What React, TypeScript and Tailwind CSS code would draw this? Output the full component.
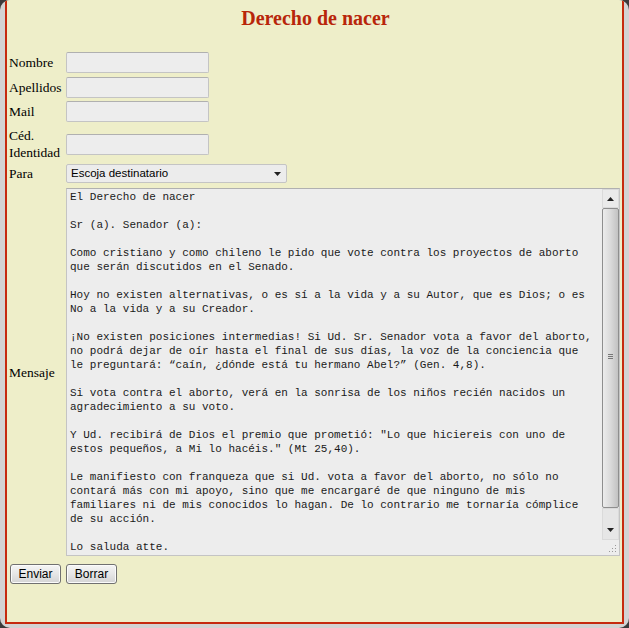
const MESSAGE = [
  "El Derecho de nacer",
  "",
  "Sr (a). Senador (a):",
  "",
  "Como cristiano y como chileno le pido que vote contra los proyectos de aborto",
  "que serán discutidos en el Senado.",
  "",
  "Hoy no existen alternativas, o es sí a la vida y a su Autor, que es Dios; o es",
  "No a la vida y a su Creador.",
  "",
  "¡No existen posiciones intermedias! Si Ud. Sr. Senador vota a favor del aborto,",
  "no podrá dejar de oír hasta el final de sus días, la voz de la conciencia que",
  "le preguntará: “caín, ¿dónde está tu hermano Abel?” (Gen. 4,8).",
  "",
  "Si vota contra el aborto, verá en la sonrisa de los niños recién nacidos un",
  "agradecimiento a su voto.",
  "",
  "Y Ud. recibirá de Dios el premio que prometió: \"Lo que hiciereis con uno de",
  "estos pequeños, a Mi lo hacéis.\" (Mt 25,40).",
  "",
  "Le manifiesto con franqueza que si Ud. vota a favor del aborto, no sólo no",
  "contará más con mi apoyo, sino que me encargaré de que ninguno de mis",
  "familiares ni de mis conocidos lo hagan. De lo contrario me tornaría cómplice",
  "de su acción.",
  "",
  "Lo saluda atte.",
].join("\n");

function TextInput() {
  return (
    <div className="h-[21px] w-[143px] rounded-[2px] border border-[#c4c4c4] border-t-[#b0b0b0] bg-[#ededed]" />
  );
}

function Arrow({ up = false }: { up?: boolean }) {
  return (
    <svg width="7" height="4" viewBox="0 0 7 4" className={up ? "rotate-180" : ""}>
      <path d="M0 0h7L3.5 4z" fill="#222" />
    </svg>
  );
}

function Button({ children }: { children: string }) {
  return (
    <button className="h-[20px] w-[51px] rounded-[3px] border border-[#707070] bg-linear-to-b from-[#f5f5f5] via-[#e6e6e6] to-[#d4d4d4] font-['Liberation_Sans',Arial,sans-serif] text-[12px] leading-[18px] text-black shadow-[inset_0_0_0_1px_#fbfbfb]">
      {children}
    </button>
  );
}

export default function App() {
  return (
    <div className="h-[628px] w-full bg-[#3b3b3b]">
      <div className="flex h-full overflow-hidden rounded-[10px] bg-[#d3d3d3] px-[5px] pb-[4px]">
        <div className="flex-1 border-x-2 border-b-2 border-[#c62a0f] bg-[#eeeec9] pl-[2px] pt-[6px] font-['Liberation_Serif','Times_New_Roman',serif] text-[13.5px] leading-[17px] text-black">
          <h1 className="h-[24px] text-center text-[20px] font-bold leading-[24px] text-[#b8250a]">
            Derecho de nacer
          </h1>

          {/* Nombre */}
          <div className="mt-[22px] flex items-center">
            <span className="w-[57px]">Nombre</span>
            <TextInput />
          </div>

          {/* Apellidos */}
          <div className="mt-[4px] flex items-center">
            <span className="w-[57px]">Apellidos</span>
            <TextInput />
          </div>

          {/* Mail */}
          <div className="mt-[3px] flex items-center">
            <span className="w-[57px]">Mail</span>
            <TextInput />
          </div>

          {/* Cédula */}
          <div className="mt-[5px] flex items-center">
            <span className="w-[57px]">
              Céd.
              <br />
              Identidad
            </span>
            <TextInput />
          </div>

          {/* Para */}
          <div className="mt-[3px] flex items-center">
            <span className="w-[57px]">Para</span>
            <div className="flex h-[19px] w-[221px] items-center justify-between rounded-[2px] border border-[#c4c4c4] bg-[#ececec] pl-[4px] pr-[5px] font-['Liberation_Sans',Arial,sans-serif] text-[11.5px] leading-[17px]">
              <span>Escoja destinatario</span>
              <Arrow />
            </div>
          </div>

          {/* Mensaje */}
          <div className="mt-[5px] flex items-center">
            <span className="w-[57px]">Mensaje</span>
            <div className="flex h-[368px] w-[554px] border border-[#c4c4c4] border-t-[#b0b0b0] bg-[#ededed]">
              <div className="flex-1 overflow-hidden whitespace-pre pl-[3px] pt-[1px] font-['Liberation_Mono','Courier_New',monospace] text-[11px] leading-[14px] text-[#1a1a1a]">
                {MESSAGE}
              </div>
              <div className="flex w-[17px] flex-col">
                <div className="flex h-[19px] items-center justify-center border border-[#dadada] bg-[#eaeaea]">
                  <Arrow up />
                </div>
                <div className="relative h-[300px] rounded-[2px] border border-[#8e8e8e] bg-linear-to-r from-[#ececec] via-[#dadada] to-[#c2c2c2]">
                  <div className="absolute left-[5px] top-[145px] flex w-[5px] flex-col gap-[1px]">
                    <div className="h-px bg-[#777]" />
                    <div className="h-px bg-[#777]" />
                    <div className="h-px bg-[#777]" />
                  </div>
                </div>
                <div className="flex h-[32px] flex-col justify-end border border-[#dadada] bg-[#e6e6e6] pb-[7px]">
                  <div className="flex justify-center">
                    <Arrow />
                  </div>
                </div>
                <div className="flex flex-1 items-end justify-end pb-[2px] pr-[2px]">
                  <svg width="9" height="9" viewBox="0 0 9 9">
                    <g fill="#9a9a9a">
                      <rect x="7" y="1" width="1" height="1" />
                      <rect x="4" y="4" width="1" height="1" />
                      <rect x="7" y="4" width="1" height="1" />
                      <rect x="1" y="7" width="1" height="1" />
                      <rect x="4" y="7" width="1" height="1" />
                      <rect x="7" y="7" width="1" height="1" />
                    </g>
                  </svg>
                </div>
              </div>
            </div>
          </div>

          {/* Buttons */}
          <div className="ml-[1px] mt-[8px] flex gap-[5px]">
            <Button>Enviar</Button>
            <Button>Borrar</Button>
          </div>
        </div>
      </div>
    </div>
  );
}
